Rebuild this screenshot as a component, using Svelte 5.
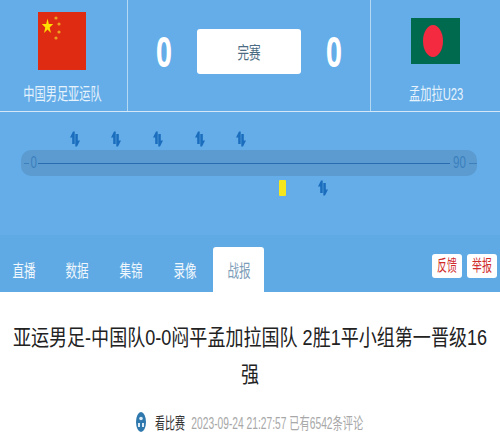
<script>
  const tabs = ['直播', '数据', '集锦', '录像'];
  const top = [0, 1, 2, 3, 4];
</script>

{#snippet sub()}
  <svg class="sub" width="10" height="16" viewBox="0 0 10 16" aria-hidden="true">
    <path d="M0 6.5 L3 0.5 L4.7 0.5 L4.7 13 L2.2 13 L2.2 6.5 Z" fill="#1b6dbd" />
    <path d="M10 9.5 L7 15.5 L5.3 15.5 L5.3 3 L7.8 3 L7.8 9.5 Z" fill="#1b6dbd" />
  </svg>
{/snippet}

<div class="page">
  <header class="score">
    <div class="team left">
      <svg class="flag" width="48" height="58" viewBox="0 0 48 58" aria-hidden="true">
        <rect width="48" height="58" fill="#de2b12" />
        <polygon fill="#ffde00" points="9.5,6.5 10.85,12 15.2,12 11.66,15.5 13,21 9.5,17.5 6,21 7.3,15.5 3.8,12 8.15,12" />
        <circle cx="18" cy="6" r="1.6" fill="#f0a020" />
        <circle cx="21" cy="12" r="1.6" fill="#f0a020" />
        <circle cx="21" cy="20" r="1.6" fill="#f0a020" />
        <circle cx="18" cy="26" r="1.6" fill="#f0a020" />
      </svg>
      <span class="name"><span class="squeeze">中国男足亚运队</span></span>
    </div>
    <div class="centre">
      <span class="goal">0</span>
      <div class="status"><span class="squeeze">完赛</span></div>
      <span class="goal">0</span>
    </div>
    <div class="team right">
      <svg class="flag bd" width="49" height="46" viewBox="0 0 49 46" aria-hidden="true">
        <rect width="49" height="46" fill="#006a4e" />
        <ellipse cx="22" cy="23" rx="10" ry="16" fill="#f42a41" />
      </svg>
      <span class="name"><span class="squeeze">孟加拉U23</span></span>
    </div>
  </header>

  <section class="timeline">
    <div class="events upper">
      {#each top as t (t)}
        {@render sub()}
      {/each}
    </div>
    <div class="bar">
      <span class="tick"></span>
      <span class="mark">0</span>
      <span class="line"></span>
      <span class="mark">90</span>
      <span class="tail"></span>
    </div>
    <div class="events lower">
      <span class="card"></span>
      {@render sub()}
    </div>
  </section>

  <nav class="tabs">
    {#each tabs as t (t)}
      <span class="tab"><span class="squeeze">{t}</span></span>
    {/each}
    <span class="tab active"><span class="squeeze">战报</span></span>
    <div class="actions">
      <span class="action"><span class="squeeze">反馈</span></span>
      <span class="action"><span class="squeeze">举报</span></span>
    </div>
  </nav>

  <article class="article">
    <h1>亚运男足-中国队0-0闷平孟加拉国队 2胜1平小组第一晋级16强</h1>
    <div class="meta">
      <svg width="10" height="20" viewBox="0 0 10 20" aria-hidden="true">
        <ellipse cx="5" cy="10" rx="5" ry="10" fill="#2f78ad" />
        <circle cx="5" cy="6.5" r="1.8" fill="#dcebf5" />
        <rect x="2" y="11" width="2" height="4" fill="#dcebf5" />
        <rect x="6" y="11" width="2" height="4" fill="#dcebf5" />
      </svg>
      <span class="source squeeze">看比赛</span>
      <span class="info squeeze">2023-09-24 21:27:57 已有6542条评论</span>
    </div>
  </article>
</div>

<style>
  :global(body) {
    margin: 0;
    background: #fff;
  }
  .page {
    width: 500px;
    height: 440px;
    overflow: hidden;
    font-family: "Liberation Sans", "Noto Sans CJK SC", sans-serif;
    background: #fff;
  }
  .squeeze {
    display: inline-block;
    white-space: nowrap;
    transform: scaleX(0.68);
  }
  .score {
    display: grid;
    grid-template-columns: 128px 242px 130px;
    height: 111px;
    background: #64ade8;
    border-bottom: 1px solid #d4e8f8;
  }
  .team {
    display: flex;
    flex-direction: column;
    align-items: center;
    color: #e6f3fd;
    min-width: 0;
  }
  .team.left {
    border-right: 1px solid #b5d8f3;
    padding-top: 12px;
    padding-right: 3px;
  }
  .team.right {
    border-left: 1px solid #b5d8f3;
    padding-top: 18px;
  }
  .flag {
    display: block;
  }
  .name {
    font-size: 17px;
    line-height: 22px;
    margin-top: 14px;
    white-space: nowrap;
  }
  .name .squeeze {
    transform: scaleX(0.66);
  }
  .team.right .name {
    margin-top: 20px;
    padding-left: 1px;
  }
  .centre {
    display: flex;
    align-items: center;
    justify-content: space-between;
    padding: 0 24px 0 24px;
    height: 102px;
  }
  .goal {
    color: #fff;
    font-size: 42px;
    font-weight: 700;
    font-family: "Open Sans", sans-serif;
    line-height: 1;
    transform: scaleX(0.66);
  }
  .status {
    width: 104px;
    height: 45px;
    background: #fff;
    border-radius: 3px;
    display: flex;
    align-items: center;
    justify-content: center;
    color: #4a6b82;
    font-size: 17px;
  }
  .timeline {
    height: 123px;
    background: #64ade8;
    box-sizing: border-box;
    padding: 19px 23px 0 21px;
  }
  .events {
    display: flex;
    align-items: center;
    height: 16px;
  }
  .upper {
    gap: 31.7px;
    padding-left: 48.5px;
  }
  .lower {
    margin-top: 4px;
    padding-left: 258px;
    gap: 32px;
  }
  .card {
    width: 7px;
    height: 16px;
    background: #f5e61e;
    border-radius: 1px;
  }
  .sub {
    display: block;
  }
  .bar {
    margin-top: 3px;
    height: 26px;
    background: #5b9bd0;
    border-radius: 10px;
    display: flex;
    align-items: center;
    padding-left: 3px;
    color: #3c80bd;
    font-size: 17px;
  }
  .tick {
    width: 5px;
    height: 1px;
    background: #3c80bd;
  }
  .mark {
    padding: 0;
    transform: scaleX(0.68);
  }
  .line {
    flex: 1;
    height: 1px;
    background: #2a6cb0;
  }
  .tail {
    width: 8px;
    height: 1px;
    background: #3c80bd;
  }
  .tabs {
    height: 57px;
    background: #5faae4;
    box-sizing: border-box;
    padding-top: 12px;
    display: flex;
    align-items: stretch;
  }
  .tab {
    width: 54px;
    display: flex;
    align-items: center;
    justify-content: center;
    color: #f0f7fd;
    font-size: 17px;
    padding-bottom: 1px;
  }
  .tab:first-child {
    width: 48px;
    padding-right: 2px;
  }
  .tab.active {
    width: 51px;
    margin-left: 1px;
    background: #fff;
    border-radius: 3px 3px 0 0;
    color: #7d9db8;
  }
  .actions {
    margin-left: auto;
    padding: 7px 3px 0 0;
    display: flex;
    gap: 4.5px;
    align-items: flex-start;
  }
  .action {
    width: 30.5px;
    height: 24px;
    background: #fff;
    border-radius: 3px;
    color: #d02b2b;
    font-size: 16px;
    line-height: 24px;
    display: flex;
    justify-content: center;
  }
  .action .squeeze {
    transform: scaleX(0.62);
  }
  .article {
    padding-top: 27px;
    overflow: hidden;
  }
  h1 {
    width: 590px;
    margin: 0 0 0 -45px;
    font-size: 22px;
    line-height: 37px;
    font-weight: 400;
    text-align: center;
    color: #222;
    transform: scaleX(0.82);
  }
  .meta {
    margin-top: 17px;
    display: flex;
    align-items: center;
    justify-content: center;
    gap: 6px;
  }
  .meta svg {
    margin-right: 3px;
  }
  .source {
    color: #333;
    font-size: 16px;
    margin: 0 -9px;
    transform: scaleX(0.62);
  }
  .info {
    color: #a8a8a8;
    font-size: 16px;
    margin: 0 -48px;
    transform: scaleX(0.64);
  }
</style>
